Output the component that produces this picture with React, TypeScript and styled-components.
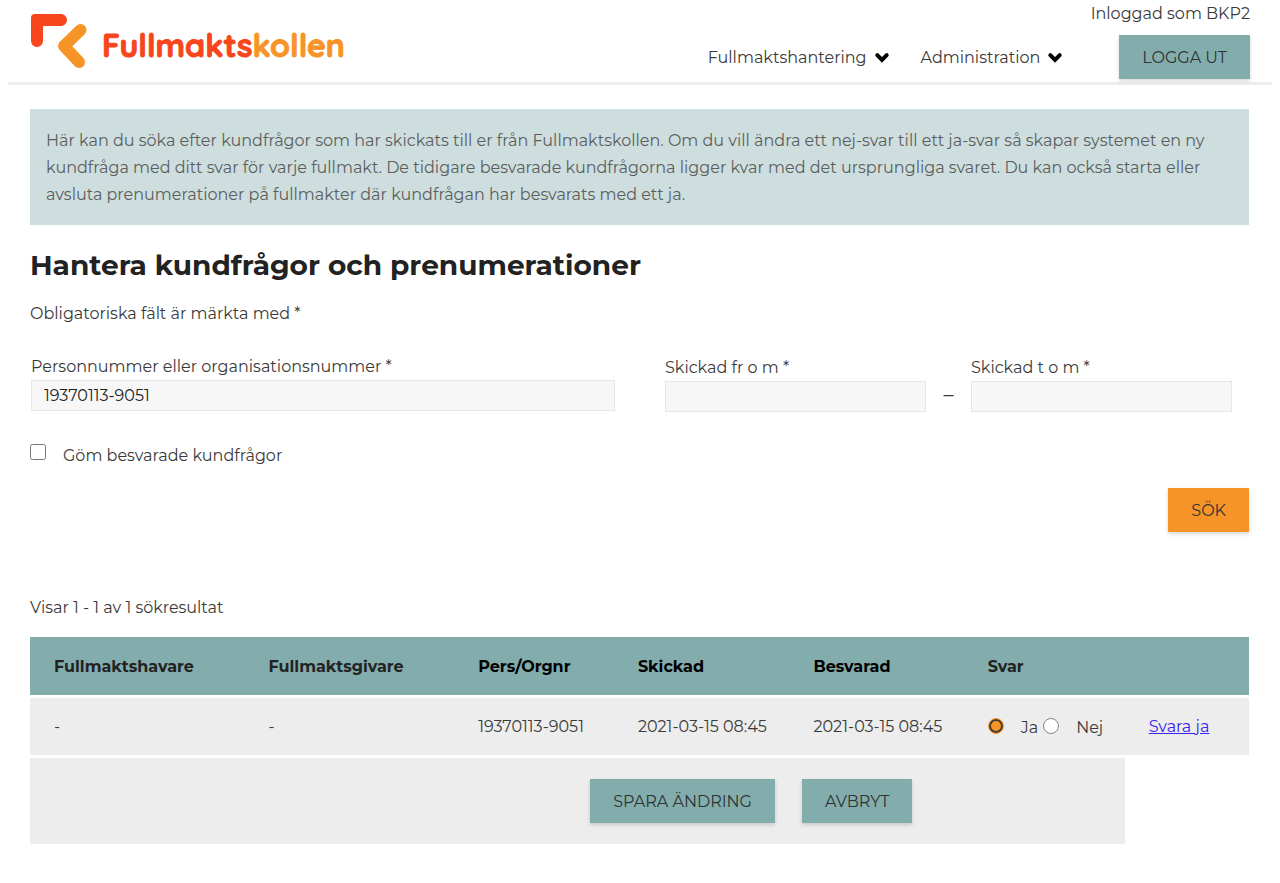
import React, { useState } from "react";
import styled, { createGlobalStyle } from "styled-components";

const colors = {
  teal: "#83adad",
  tealLight: "#cedddd",
  orange: "#f79428",
  red: "#f7461b",
  text: "#3a3a3a",
  row: "#ededed",
};

const GlobalStyle = createGlobalStyle`
  *, *::before, *::after { box-sizing: border-box; }
  body {
    margin: 0 8px;
    background: #fff;
    color: ${colors.text};
    font-family: Montserrat, Inter, "Open Sans", sans-serif;
    font-size: 16px;
    line-height: 22px;
  }
  button, input { font: inherit; color: inherit; }
`;

const Header = styled.header`
  display: flex;
  justify-content: space-between;
  align-items: flex-start;
  height: 85px;
  padding: 0 22px;
  border-bottom: 3px solid #ededed;
`;

const LogoLink = styled.a`
  display: block;
  margin-top: 12px;
`;

const HeaderRight = styled.div`
  display: flex;
  flex-direction: column;
  align-items: flex-end;
  gap: 10px;
  padding-top: 3px;
`;

const Nav = styled.nav`
  display: flex;
  align-items: center;
`;

const NavButton = styled.button<{ $gapAfter: number }>`
  display: flex;
  align-items: center;
  gap: 7px;
  margin: 0 ${(p) => p.$gapAfter}px 0 0;
  padding: 1px 0 0;
  border: 0;
  background: none;
  cursor: pointer;
`;

const Button = styled.button<{ $tone?: "teal" | "orange" }>`
  height: 44px;
  padding: 1px 23px 0;
  border: 0;
  background: ${(p) => (p.$tone === "orange" ? colors.orange : colors.teal)};
  box-shadow: 0 2px 4px rgba(0, 0, 0, 0.16);
  color: #2d3333;
  text-transform: uppercase;
  cursor: pointer;
`;

const Main = styled.main`
  padding: 24px 23px 38px 22px;
`;

const Info = styled.p`
  margin: 0;
  padding: 18px 16px 17px;
  background: ${colors.tealLight};
  color: #5b5f5f;
  line-height: 27px;
`;

const Title = styled.h1`
  margin: 22px 0 0;
  color: #222;
  font-size: 28px;
  font-weight: 700;
  line-height: 36px;
`;

const Note = styled.p`
  margin: 20px 0 0;
`;

const Fields = styled.div`
  display: grid;
  grid-template-columns: 584fr 567fr;
  column-gap: 50px;
  margin-top: 31px;
  padding: 0 17px 0 1px;
`;

const DateRange = styled.div`
  display: grid;
  grid-template-columns: 1fr 45px 1fr;
  align-items: end;
  padding-top: 1px;
`;

const Dash = styled.span`
  font-size: 20px;
  line-height: 36px;
  text-align: center;
`;

const Field = styled.div`
  display: flex;
  flex-direction: column;
  gap: 2px;
`;

const TextInput = styled.input`
  width: 100%;
  height: 31px;
  padding: 0 12px;
  border: 1px solid #e6e6e6;
  border-radius: 0;
  background: #f7f7f7;
  color: #222;
`;

const CheckRow = styled.div`
  display: flex;
  align-items: flex-start;
  gap: 17px;
  margin-top: 32px;
`;

const Checkbox = styled.input`
  width: 16px;
  height: 16px;
  margin: 0;
`;

const CheckLabel = styled.label`
  padding-top: 1px;
`;

const FormActions = styled.div`
  display: flex;
  justify-content: flex-end;
  margin-top: 21px;
`;

const ResultCount = styled.p`
  margin: 65px 0 0;
`;

const Table = styled.table`
  width: 100%;
  margin-top: 15px;
  border-collapse: separate;
  border-spacing: 0 3px;
  table-layout: fixed;
`;

const Col = styled.col<{ $width: number }>`
  width: ${(p) => p.$width}%;
`;

const HeadCell = styled.th<{ $sortable?: boolean }>`
  height: 58px;
  padding: 1px 24px 0;
  background: ${colors.teal};
  color: ${(p) => (p.$sortable ? "#000" : "#222")};
  font-weight: 700;
  text-align: left;
`;

const Cell = styled.td`
  height: 57px;
  padding: 0 0 0 24px;
  background: ${colors.row};
  white-space: nowrap;
`;

const FooterCell = styled.td`
  height: 86px;
  padding: 0 0 0 348px;
  background: ${colors.row};
`;

const FooterActions = styled.div`
  display: flex;
  justify-content: center;
  gap: 27px;
`;

const Answers = styled.div`
  display: flex;
  gap: 5px;
`;

const Answer = styled.label`
  display: flex;
  align-items: flex-start;
  gap: 17px;
`;

const AnswerText = styled.span`
  padding-top: 3px;
`;

const Radio = styled.input`
  appearance: none;
  width: 16px;
  height: 16px;
  margin: 4px 0 0;
  border: 1px solid #858585;
  border-radius: 50%;
  background: #fff;

  &:checked {
    border-color: ${colors.orange};
    background: ${colors.orange};
    box-shadow: inset 0 0 0 2px #403c38;
  }
`;

const AnswerLink = styled.a`
  color: #3a22f0;
`;

const Logo = () => (
  <svg width="330" height="58" viewBox="0 0 330 58" role="img" aria-label="Fullmaktskollen">
    <path d="M7 29V12.500Q7 8 11.500 8H31" fill="none" stroke={colors.red} strokeWidth="12" strokeLinecap="round" />
    <path d="M1 12V6Q1 2 5 2H14V14H1Z" fill={colors.red} />
    <path d="M50.500 18L34 34L49 50" fill="none" stroke={colors.orange} strokeWidth="12" strokeLinecap="round" strokeLinejoin="round" />
    <text
      x="72"
      y="45"
      fontFamily="Quicksand, 'Varela Round', Nunito, Montserrat, sans-serif"
      fontSize="32"
      fontWeight="700"
      strokeWidth="1"
      strokeLinejoin="round"
      fill={colors.red}
      stroke={colors.red}
    >
      Fullmakts
      <tspan fill={colors.orange} stroke={colors.orange}>kollen</tspan>
    </text>
  </svg>
);

const Chevron = () => (
  <svg width="16" height="12" viewBox="0 0 16 12" aria-hidden="true">
    <path d="M3.300 3.200L8 7.900L12.700 3.200" fill="none" stroke="#000" strokeWidth="4" strokeLinecap="round" />
  </svg>
);

const columns = [
  { title: "Fullmaktshavare", width: 17.6 },
  { title: "Fullmaktsgivare", width: 17.2 },
  { title: "Pers/Orgnr", width: 13.1, sortable: true },
  { title: "Skickad", width: 14.4, sortable: true },
  { title: "Besvarad", width: 14.3, sortable: true },
  { title: "Svar", width: 13.2 },
  { title: "", width: 10.2 },
];

export default function App() {
  const [personNumber, setPersonNumber] = useState("19370113-9051");
  const [answer, setAnswer] = useState("ja");

  return (
    <>
      <GlobalStyle />
      <Header>
        <LogoLink href="#">
          <Logo />
        </LogoLink>
        <HeaderRight>
          <span>Inloggad som BKP2</span>
          <Nav>
            <NavButton type="button" $gapAfter={31}>
              Fullmaktshantering <Chevron />
            </NavButton>
            <NavButton type="button" $gapAfter={56}>
              Administration <Chevron />
            </NavButton>
            <Button type="button">Logga ut</Button>
          </Nav>
        </HeaderRight>
      </Header>
      <Main>
        <Info>
          Här kan du söka efter kundfrågor som har skickats till er från Fullmaktskollen. Om du vill ändra ett
          nej-svar till ett ja-svar så skapar systemet en ny kundfråga med ditt svar för varje fullmakt. De tidigare
          besvarade kundfrågorna ligger kvar med det ursprungliga svaret. Du kan också starta eller avsluta
          prenumerationer på fullmakter där kundfrågan har besvarats med ett ja.
        </Info>
        <Title>Hantera kundfrågor och prenumerationer</Title>
        <Note>Obligatoriska fält är märkta med *</Note>
        <form onSubmit={(e) => e.preventDefault()}>
          <Fields>
            <Field>
              <label htmlFor="person">Personnummer eller organisationsnummer *</label>
              <TextInput id="person" value={personNumber} onChange={(e) => setPersonNumber(e.target.value)} />
            </Field>
            <DateRange>
              <Field>
                <label htmlFor="from">Skickad fr o m *</label>
                <TextInput id="from" />
              </Field>
              <Dash>–</Dash>
              <Field>
                <label htmlFor="to">Skickad t o m *</label>
                <TextInput id="to" />
              </Field>
            </DateRange>
          </Fields>
          <CheckRow>
            <Checkbox type="checkbox" id="hide" />
            <CheckLabel htmlFor="hide">Göm besvarade kundfrågor</CheckLabel>
          </CheckRow>
          <FormActions>
            <Button type="submit" $tone="orange">Sök</Button>
          </FormActions>
        </form>
        <ResultCount>Visar 1 - 1 av 1 sökresultat</ResultCount>
        <Table>
          <colgroup>
            {columns.map((c) => (
              <Col key={c.title} $width={c.width} />
            ))}
          </colgroup>
          <thead>
            <tr>
              {columns.map((c) => (
                <HeadCell key={c.title} scope="col" $sortable={c.sortable}>
                  {c.title}
                </HeadCell>
              ))}
            </tr>
          </thead>
          <tbody>
            <tr>
              <Cell>-</Cell>
              <Cell>-</Cell>
              <Cell>19370113-9051</Cell>
              <Cell>2021-03-15 08:45</Cell>
              <Cell>2021-03-15 08:45</Cell>
              <Cell>
                <Answers>
                  <Answer>
                    <Radio type="radio" name="svar" checked={answer === "ja"} onChange={() => setAnswer("ja")} />
                    <AnswerText>Ja</AnswerText>
                  </Answer>
                  <Answer>
                    <Radio type="radio" name="svar" checked={answer === "nej"} onChange={() => setAnswer("nej")} />
                    <AnswerText>Nej</AnswerText>
                  </Answer>
                </Answers>
              </Cell>
              <Cell>
                <AnswerLink href="#">Svara ja</AnswerLink>
              </Cell>
            </tr>
          </tbody>
          <tfoot>
            <tr>
              <FooterCell colSpan={6}>
                <FooterActions>
                  <Button type="button">Spara ändring</Button>
                  <Button type="button">Avbryt</Button>
                </FooterActions>
              </FooterCell>
            </tr>
          </tfoot>
        </Table>
      </Main>
    </>
  );
}
